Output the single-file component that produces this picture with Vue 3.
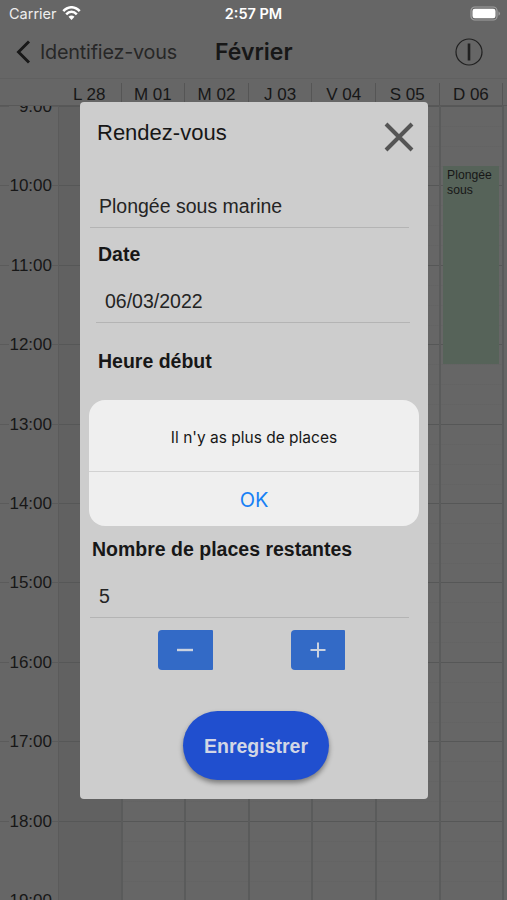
<script setup>
const days = ['L 28', 'M 01', 'M 02', 'J 03', 'V 04', 'S 05', 'D 06']
const hours = ['9:00', '10:00', '11:00', '12:00', '13:00', '14:00', '15:00', '16:00', '17:00', '18:00', '19:00']
</script>

<template>
  <main class="screen">
    <div class="status">
      <span class="carrier">Carrier</span>
      <svg class="wifi" width="19" height="15" viewBox="0 0 19 15">
        <path d="M1.300 5.200C6-.1 13-.1 17.700 5.200M4.200 8.300C7.300 5 11.700 5 14.800 8.300" fill="none" stroke="#fff" stroke-width="2.500" />
        <path d="M6.500 10.700Q9.500 8.100 12.500 10.700L9.500 14Z" fill="#fff" />
      </svg>
      <span class="clock">2:57 PM</span>
      <svg class="battery" width="31" height="15" viewBox="0 0 31 15">
        <rect x="1" y="1" width="26" height="13" rx="3.800" fill="none" stroke="#a0a0a0" stroke-width="1.200" />
        <rect x="2.500" y="2.700" width="23" height="9.600" rx="2.300" fill="#fff" />
        <path d="M28.500 5.200Q31.500 7.500 28.500 9.800Z" fill="#a0a0a0" />
      </svg>
    </div>

    <header class="nav">
      <svg class="back" width="16" height="26" viewBox="0 0 16 26">
        <path d="M14 2.500L3.500 13L14 23.500" fill="none" stroke="#181818" stroke-width="2.900" />
      </svg>
      <span class="back-label">Identifiez-vous</span>
      <h1 class="month">Février</h1>
      <svg class="info" width="28" height="28" viewBox="0 0 28 28">
        <circle cx="14" cy="14" r="13" fill="none" stroke="#202020" stroke-width="1.200" />
        <path d="M14 5.500V22.500" stroke="#202020" stroke-width="2.600" />
      </svg>
    </header>

    <div class="days">
      <span v-for="day in days" :key="day" class="day">{{ day }}</span>
    </div>

    <section class="calendar">
      <div class="times">
        <div v-for="hour in hours" :key="hour" class="time"><span>{{ hour }}</span></div>
      </div>
      <div v-for="(day, i) in days" :key="day" class="column" :class="{ past: i === 0 }">
        <div v-for="hour in hours" :key="hour" class="slot"></div>
        <div v-if="i === 6" class="event">Plongée<br>sous</div>
      </div>
    </section>

    <section class="modal">
      <div class="modal-head">
        <h2>Rendez-vous</h2>
        <svg width="30" height="30" viewBox="0 0 30 30">
          <path d="M2 2L28 28M28 2L2 28" stroke="#555" stroke-width="4" />
        </svg>
      </div>
      <div class="input activity">Plongée sous marine</div>
      <div class="label date-label">Date</div>
      <div class="input date">06/03/2022</div>
      <div class="label start-label">Heure début</div>
      <div class="label seats-label">Nombre de places restantes</div>
      <div class="input seats">5</div>
      <div class="stepper">
        <button class="step"><svg width="16" height="16" viewBox="0 0 16 16"><path d="M0 8H16" stroke="#cbd2df" stroke-width="2.400" /></svg></button>
        <button class="step"><svg width="16" height="16" viewBox="0 0 16 16"><path d="M.5 8H15.500M8 .5V15.500" stroke="#cbd2df" stroke-width="2" /></svg></button>
      </div>
      <button class="save">Enregistrer</button>
    </section>

    <section class="alert">
      <p>Il n'y as plus de places</p>
      <button class="ok">OK</button>
    </section>
  </main>
</template>

<style>
body { margin: 0; overflow: hidden; }
</style>

<style scoped>
.screen {
  position: relative;
  display: flex;
  flex-direction: column;
  width: 507px;
  height: 900px;
  overflow: hidden;
  background: #666;
  color: #171717;
  font-family: "Liberation Sans", Arial, sans-serif;
}
h1, h2, p { margin: 0; font-weight: 400; }
button { border: 0; padding: 0; font-family: inherit; }
svg { display: block; flex: none; }

.status {
  display: flex;
  align-items: center;
  height: 27px;
  padding-left: 9px;
  flex: none;
  color: #eee;
  font-family: Inter, sans-serif;
  font-size: 14.500px;
}
.carrier { width: 53px; white-space: nowrap; }
.clock { width: 100px; margin-left: 122.500px; text-align: center; font-weight: 600; font-size: 14.500px; color: #fff; }
.battery { margin-left: 166.500px; }

.nav {
  display: flex;
  align-items: center;
  height: 50px;
  flex: none;
  padding: 0 0 1px 15px;
  font-family: Inter, sans-serif;
  border-bottom: 1px solid #606060;
}
.back-label { width: 175px; margin-left: 9px; font-size: 19.800px; letter-spacing: -.2px; color: #272727; white-space: nowrap; }
.month { width: 226px; font-size: 23px; font-weight: 600; white-space: nowrap; }
.info { margin-left: 14px; }

.days {
  display: flex;
  flex: none;
  height: 27px;
  padding-left: 58px;
  box-sizing: border-box;
  border-bottom: 1px solid #585858;
}
.day {
  width: 63.600px;
  flex: none;
  box-sizing: border-box;
  margin-top: 4px;
  height: 22px;
  border-right: 1px solid #555;
  line-height: 23px;
  text-align: center;
  font-size: 17px;
}

.calendar { display: flex; height: 794px; flex: none; overflow: hidden; }
.times { width: 59px; flex: none; box-sizing: border-box; border-right: 1px solid #5b5b5b; }
.time {
  height: 79.400px;
  box-sizing: border-box;
  border-top: 1px solid #5b5b5b;
  font-size: 17px;
}
.time span {
  display: block;
  width: 43px;
  height: 20px;
  margin: -10px 0 0 9px;
  line-height: 20px;
  text-align: right;
  background: #666;
}
.column {
  position: relative;
  width: 63.600px;
  flex: none;
  box-sizing: border-box;
  border-right: 2px solid #5a5b5b;
}
.past { background: #616161; }
.slot {
  height: 79.400px;
  box-sizing: border-box;
  border-top: 1px solid #565757;
  background: repeating-linear-gradient(#0000 0 19px, #6161617f 19px 20px);
}
.past .slot { background: none; }
.event {
  position: absolute;
  top: 60px;
  left: 2px;
  width: 56px;
  height: 198px;
  box-sizing: border-box;
  padding: 2px 0 0 4.500px;
  background: #566359;
  font-size: 12.200px;
  line-height: 14.700px;
}

.modal {
  position: absolute;
  left: 80px;
  top: 102px;
  width: 348px;
  height: 697px;
  box-sizing: border-box;
  padding: 19px 19px 0 10px;
  border-radius: 4px;
  background: #cdcdcd;
}
.modal-head { display: flex; justify-content: space-between; height: 72px; padding-left: 7px; }
.modal-head h2 { font-size: 22px; line-height: 24px; }
.modal-head svg { margin: 1px -5px 0 0; }
.input {
  height: 34px;
  box-sizing: border-box;
  border-bottom: 1px solid #b4b4b4;
  padding-left: 9px;
  font-size: 19.500px;
  line-height: 24px;
  color: #242424;
}
.activity { margin-top: 1px; }
.label { font-weight: 700; font-size: 19.500px; line-height: 24px; }
.date-label { margin: 14px 0 0 8px; }
.date { margin: 23px -1px 0 6px; }
.start-label { margin: 26px 0 0 8px; }
.seats-label { margin: 164px 0 0 2px; }
.seats { margin-top: 23px; }
.stepper { display: flex; gap: 78px; margin: 12px 0 0 68px; }
.step {
  display: flex;
  align-items: center;
  justify-content: center;
  width: 54.500px;
  height: 40px;
  border-radius: 4px 1px 1px 4px;
  background: #336ac6;
}
.save {
  display: block;
  width: 146px;
  height: 69px;
  margin: 40.500px 0 0 93px;
  padding-top: 3px;
  border-radius: 35px;
  background: #204fcf;
  box-shadow: 0 3px 5px #0006;
  color: #d2d6e5;
  font-size: 19.500px;
  font-weight: 700;
}

.alert {
  position: absolute;
  left: 89px;
  top: 400px;
  width: 330px;
  height: 126px;
  overflow: hidden;
  border-radius: 16px;
  background: #efefef;
  text-align: center;
  font-family: Inter, sans-serif;
}
.alert p { height: 71px; border-bottom: 1px solid #d2d2d2; line-height: 75px; font-size: 15.500px; }
.ok { width: 100%; height: 54px; padding-top: 1px; background: none; color: #1780f5; font-size: 20px; }
</style>
